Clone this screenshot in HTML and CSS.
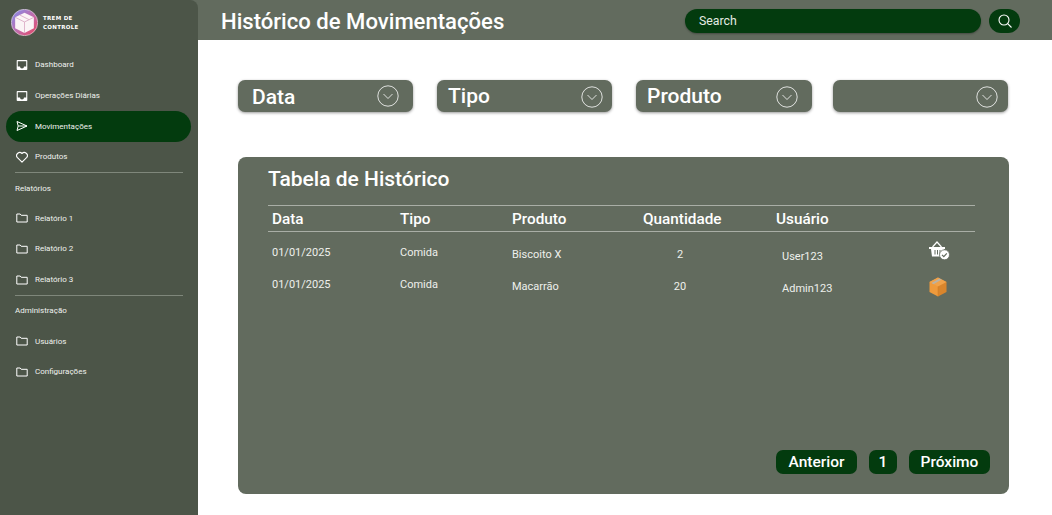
FILE: index.html
```html
<!DOCTYPE html>
<html lang="pt-BR">
<head>
  <meta charset="UTF-8" />
  <meta name="viewport" content="width=device-width, initial-scale=1.0" />
  <title>Histórico de Movimentações</title>
  <link rel="stylesheet" href="styles.css">
</head>
<body>
  <aside class="sidebar">
    <div class="brand">
      <svg class="brand-logo" viewBox="0 0 26 26">
        <defs>
          <linearGradient id="ring" x1="0" y1="0" x2="1" y2="1">
            <stop offset="0" stop-color="#7f8ff0"/>
            <stop offset="0.55" stop-color="#c46aa8"/>
            <stop offset="1" stop-color="#e8405a"/>
          </linearGradient>
        </defs>
        <circle cx="13" cy="13" r="12.700" fill="url(#ring)" stroke="#e9dfe4" stroke-width="0.600"/>
        <path d="M13 3.500 22 8v10.500L13 23 4 18.500V8Z" fill="#fbf4f6"/>
        <path d="M4 8 13 12.500 22 8M13 12.500V23M8.500 5.800 17.500 10.300" fill="none" stroke="#d9a9c4" stroke-width="0.800"/>
      </svg>
      <span class="brand-name">TREM DE<br>CONTROLE</span>
    </div>

    <nav class="nav">
      <a class="nav-item">
        <svg class="nav-icon" viewBox="0 0 12 12"><path d="M1.500 1h9a.8.8 0 0 1 .8.8v8.400a.8.8 0 0 1-.8.8h-9a.8.8 0 0 1-.8-.8V1.800a.8.8 0 0 1 .8-.8Z" fill="#fff"/><path d="M1.800 2.200h8.400v5.300H8a2 2 0 0 1-4 0H1.800Z" fill="#4c5548"/></svg>
        Dashboard
      </a>
      <a class="nav-item">
        <svg class="nav-icon" viewBox="0 0 12 12"><path d="M1.500 1h9a.8.8 0 0 1 .8.8v8.400a.8.8 0 0 1-.8.8h-9a.8.8 0 0 1-.8-.8V1.800a.8.8 0 0 1 .8-.8Z" fill="#fff"/><path d="M1.800 2.200h8.400v5.300H8a2 2 0 0 1-4 0H1.800Z" fill="#4c5548"/></svg>
        Operações Diárias
      </a>
      <a class="nav-item active">
        <svg class="nav-icon" viewBox="0 0 12 12"><path d="M1 1.500 11 6 1 10.500 2.200 6ZM2.200 6H11" fill="none" stroke="#fff" stroke-width="1" stroke-linejoin="round"/></svg>
        Movimentações
      </a>
      <a class="nav-item">
        <svg class="nav-icon" viewBox="0 0 12 12"><path d="M6 11.200 1.200 6.400A3.100 3.100 0 0 1 6 2.500a3.100 3.100 0 0 1 4.800 3.900Z" fill="none" stroke="#fff" stroke-width="1.100" stroke-linejoin="round"/></svg>
        Produtos
      </a>
      <div class="nav-section">Relatórios</div>
      <a class="nav-item">
        <svg class="nav-icon" viewBox="0 0 12 12"><path d="M.8 2h3.400l1 1.300h6v6.700H.8Z" fill="none" stroke="#fff" stroke-width="1"/></svg>
        Relatório 1
      </a>
      <a class="nav-item">
        <svg class="nav-icon" viewBox="0 0 12 12"><path d="M.8 2h3.400l1 1.300h6v6.700H.8Z" fill="none" stroke="#fff" stroke-width="1"/></svg>
        Relatório 2
      </a>
      <a class="nav-item">
        <svg class="nav-icon" viewBox="0 0 12 12"><path d="M.8 2h3.400l1 1.300h6v6.700H.8Z" fill="none" stroke="#fff" stroke-width="1"/></svg>
        Relatório 3
      </a>
      <div class="nav-section">Administração</div>
      <a class="nav-item">
        <svg class="nav-icon" viewBox="0 0 12 12"><path d="M.8 2h3.400l1 1.300h6v6.700H.8Z" fill="none" stroke="#fff" stroke-width="1"/></svg>
        Usuários
      </a>
      <a class="nav-item">
        <svg class="nav-icon" viewBox="0 0 12 12"><path d="M.8 2h3.400l1 1.300h6v6.700H.8Z" fill="none" stroke="#fff" stroke-width="1"/></svg>
        Configurações
      </a>
    </nav>
  </aside>

  <div class="page">
    <header class="topbar">
      <h1>Histórico de Movimentações</h1>
      <div class="search">
        <div class="search-input">Search</div>
        <button class="search-btn">
          <svg viewBox="0 0 16 16" width="16" height="16"><circle cx="7" cy="7" r="5" fill="none" stroke="#fff" stroke-width="1.100"/><path d="M10.700 10.700 14.500 14.500" stroke="#fff" stroke-width="1.100"/></svg>
        </button>
      </div>
    </header>

    <main class="content">
      <div class="filters">
        <div class="filter filter-data">Data
          <svg class="chev" viewBox="0 0 22 22"><circle cx="11" cy="11" r="10.200" fill="none" stroke="#fff" stroke-width="0.800"/><path d="M6.500 9 11 13.500 15.500 9" fill="none" stroke="#fff" stroke-width="0.800"/></svg>
        </div>
        <div class="filter filter-tipo">Tipo
          <svg class="chev" viewBox="0 0 22 22"><circle cx="11" cy="11" r="10.200" fill="none" stroke="#fff" stroke-width="0.800"/><path d="M6.500 9 11 13.500 15.500 9" fill="none" stroke="#fff" stroke-width="0.800"/></svg>
        </div>
        <div class="filter filter-produto">Produto
          <svg class="chev" viewBox="0 0 22 22"><circle cx="11" cy="11" r="10.200" fill="none" stroke="#fff" stroke-width="0.800"/><path d="M6.500 9 11 13.500 15.500 9" fill="none" stroke="#fff" stroke-width="0.800"/></svg>
        </div>
        <div class="filter filter-empty">
          <svg class="chev" viewBox="0 0 22 22"><circle cx="11" cy="11" r="10.200" fill="none" stroke="#fff" stroke-width="0.800"/><path d="M6.500 9 11 13.500 15.500 9" fill="none" stroke="#fff" stroke-width="0.800"/></svg>
        </div>
      </div>

      <section class="history">
        <h2>Tabela de Histórico</h2>
        <div class="table-head">
          <div class="first">Data</div>
          <div>Tipo</div>
          <div>Produto</div>
          <div>Quantidade</div>
          <div>Usuário</div>
        </div>
        <div class="table-row">
          <div class="first">01/01/2025</div>
          <div>Comida</div>
          <div class="low">Biscoito X</div>
          <div class="qty">2</div>
          <div class="user">User123</div>
          <div class="action basket">
            <svg viewBox="0 0 23 22" width="23" height="22">
              <path d="M2 8h16v2h-1l-1 7.500H5L4 10H2Z" fill="#fff"/>
              <path d="M5.500 8 10 3l4.500 5" fill="none" stroke="#fff" stroke-width="1.200"/>
              <path d="M8 11v4.500M10.500 11v4.500M13 11v4.500" stroke="#626b5e" stroke-width="1"/>
              <circle cx="17.500" cy="15.800" r="5" fill="#fff" stroke="#626b5e" stroke-width="0.800"/>
              <path d="M15 15.800l1.800 1.800 3-3.200" fill="none" stroke="#626b5e" stroke-width="1.200"/>
            </svg>
          </div>
        </div>
        <div class="table-row">
          <div class="first">01/01/2025</div>
          <div>Comida</div>
          <div class="low">Macarrão</div>
          <div class="qty">20</div>
          <div class="user">Admin123</div>
          <div class="action">
            <svg viewBox="0 0 22 22" width="22" height="22">
              <path d="M11 1.500 19.500 6v10L11 20.500Z" fill="#d9852c"/>
              <path d="M11 1.500 2.500 6v10l8.500 4.500Z" fill="#ee9a3c"/>
              <path d="M2.500 6 11 10.500 19.500 6 11 1.500Z" fill="#f0a24a"/>
              <path d="M11 10.500V20.500" stroke="#c97a26" stroke-width="0.500"/>
              <path d="M4.500 7 12.500 2.500l2.200 1.100L6.500 8.200Z" fill="#b9b2a6"/>
            </svg>
          </div>
        </div>
        <div class="pager">
          <button class="wide">Anterior</button>
          <button class="page-num">1</button>
          <button class="wide">Próximo</button>
        </div>
      </section>
    </main>
  </div>
</body>
</html>
```

FILE: styles.css
```css
:root {
  --side: #4c5548;
  --panel: #626b5e;
  --green: #033b0e;
}

* {
  box-sizing: border-box;
}

body {
  font-family: Roboto, 'Liberation Sans', sans-serif;
  margin: 0;
  display: flex;
  height: 515px;
  overflow: hidden;
  background-color: #fff;
  color: #fff;
}

.sidebar {
  width: 198px;
  flex: none;
  position: relative;
  z-index: 1;
  background-color: var(--side);
  border-top-right-radius: 8px;
  padding: 9px 7px 0 6px;
}

.brand {
  display: flex;
  align-items: center;
  gap: 5px;
  padding-left: 5px;
  height: 27px;
}

.brand-logo {
  width: 27px;
  height: 27px;
}

.brand-name {
  font-family: 'DejaVu Sans', sans-serif;
  font-size: 5.500px;
  font-weight: 700;
  line-height: 8.500px;
  letter-spacing: 0.300px;
}

.nav {
  margin-top: 13.500px;
}

.nav-item {
  display: flex;
  align-items: center;
  gap: 7px;
  height: 30.700px;
  padding-left: 10px;
  font-size: 8px;
  color: #f0f2ee;
  border-radius: 16px;
}

.nav-item.active {
  background-color: var(--green);
}

.nav-icon {
  width: 12px;
  height: 12px;
  flex: none;
}

.nav-section {
  display: flex;
  align-items: center;
  height: 30.700px;
  margin: 0 8px 0 9px;
  font-size: 8px;
  color: #f0f2ee;
  border-top: 1.500px solid #7f877b;
}

.page {
  flex: 1;
  display: flex;
  flex-direction: column;
  min-width: 0;
}

/* runs under the sidebar so its rounded corner shows this colour */
.topbar {
  display: flex;
  align-items: center;
  justify-content: space-between;
  height: 40px;
  flex: none;
  margin-left: -8px;
  padding: 2px 32px 0 31px;
  background-color: var(--panel);
}

.topbar h1 {
  margin: 0;
  font-size: 22.100px;
  font-weight: 500;
}

.search {
  display: flex;
  align-items: center;
  gap: 8px;
}

.search-input {
  width: 296px;
  height: 24px;
  padding-left: 14px;
  line-height: 24px;
  font-size: 12.300px;
  color: #e4ebe3;
  background-color: var(--green);
  border-radius: 12px;
  box-shadow: 0 1px 2px rgba(0, 0, 0, 0.3);
}

.search-btn {
  display: flex;
  align-items: center;
  justify-content: center;
  width: 31px;
  height: 24px;
  padding: 0;
  border: none;
  border-radius: 12px;
  background-color: var(--green);
}

.content {
  flex: 1;
  padding: 40px 43px 21px 40px;
  display: flex;
  flex-direction: column;
}

.filters {
  display: flex;
}

.filter {
  width: 175px;
  flex: none;
  display: flex;
  align-items: center;
  justify-content: space-between;
  height: 32px;
  font-size: 21px;
  font-weight: 500;
  background-color: var(--panel);
  border-radius: 7px;
  box-shadow: 0 1px 3px rgba(0, 0, 0, 0.4);
}

.filter-data {
  padding: 2px 14px 0 14px;
}

.filter-tipo {
  margin-left: 24px;
  padding: 0 9px 0 11px;
}

.filter-produto {
  width: 176px;
  margin-left: 24px;
  padding: 0 14px 0 11px;
}

.filter-empty {
  margin-left: 21px;
  padding-right: 10px;
  justify-content: flex-end;
}

.filter-data .chev {
  margin-top: -3px;
}

.chev {
  width: 22px;
  height: 22px;
  flex: none;
  margin-top: 1px;
}

.history {
  flex: 1;
  display: flex;
  flex-direction: column;
  margin-top: 45px;
  padding: 9px 19px 20px 30px;
  background-color: var(--panel);
  border-radius: 8px;
}

.history h2 {
  margin: 0;
  font-size: 21px;
  font-weight: 500;
  line-height: 26px;
}

.table-head, .table-row {
  display: grid;
  grid-template-columns: 132px 112px 131px 133px 1fr;
  margin-right: 15px;
}

.table-head {
  height: 27px;
  margin-top: 13px;
  align-items: center;
  font-size: 15.300px;
  font-weight: 500;
  border-top: 1px solid #a9aea6;
  border-bottom: 1.500px solid #a9aea6;
}

.table-row {
  grid-template-columns: 132px 112px 131px 133px 151px 1fr;
  height: 32px;
  font-size: 11px;
  color: #eef0ec;
  line-height: 14px;
  padding-top: 8px;
}

.table-head + .table-row {
  margin-top: 6px;
}

.first {
  padding-left: 4px;
}

.low {
  padding-top: 1.500px;
}

.qty {
  width: 74px;
  padding-top: 2px;
  text-align: center;
}

.user {
  padding-top: 4px;
  padding-left: 6px;
}

.action {
  margin-top: -2px;
}

.action.basket {
  margin-top: -7px;
}

.pager {
  display: flex;
  gap: 12px;
  justify-content: flex-end;
  margin-top: auto;
}

.pager button {
  height: 24px;
  padding: 0;
  font-family: inherit;
  font-size: 15.500px;
  font-weight: 500;
  color: #fff;
  border: none;
  border-radius: 7px;
  background-color: var(--green);
}

.pager .wide {
  width: 81px;
}

.pager .page-num {
  width: 28px;
}
```
